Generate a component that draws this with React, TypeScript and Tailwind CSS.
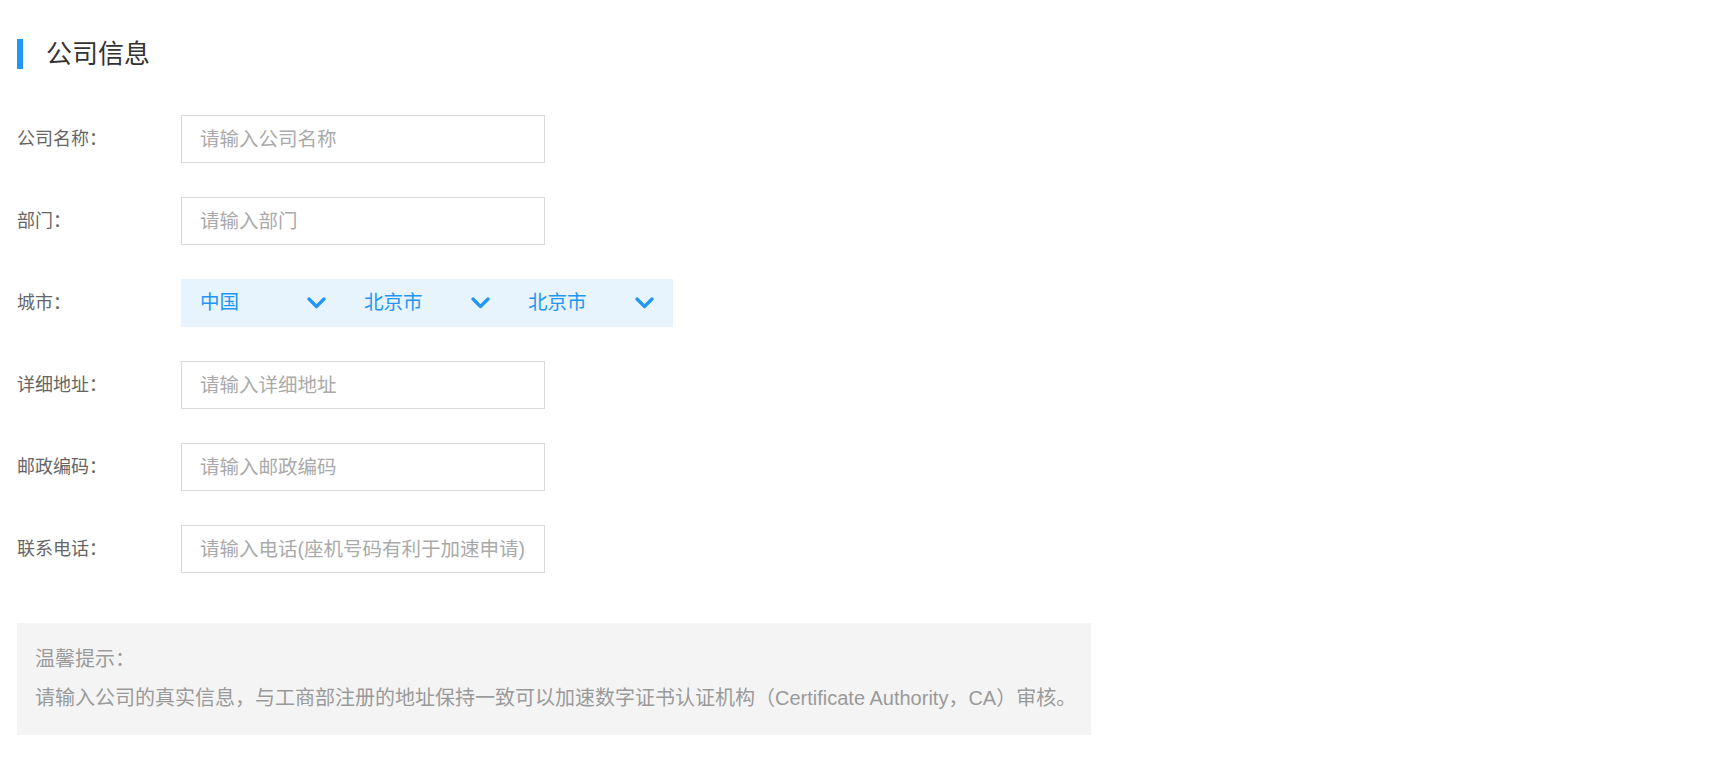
import { useState } from "react"

const FONT = { fontFamily: '"Liberation Sans", "Noto Sans CJK SC", sans-serif' }

const fields = [
  { label: "公司名称：", placeholder: "请输入公司名称" },
  { label: "部门：", placeholder: "请输入部门" },
  { label: "城市：", select: true },
  { label: "详细地址：", placeholder: "请输入详细地址" },
  { label: "邮政编码：", placeholder: "请输入邮政编码" },
  { label: "联系电话：", placeholder: "请输入电话(座机号码有利于加速申请)" },
]

function Chevron() {
  return (
    <svg width="19" height="12" viewBox="0 0 19 12" fill="none">
      <polyline points="2,2 9.5,9.5 17,2" stroke="#2196f3" strokeWidth="3.2" strokeLinecap="round" strokeLinejoin="round" />
    </svg>
  )
}

function CitySelect() {
  const [values] = useState(["中国", "北京市", "北京市"])
  return (
    <div className="flex w-[492px] h-[48px] bg-[#e8f4fd]">
      {values.map((v, i) => (
        <div key={i} className="flex w-[164px] items-center justify-between pl-[19px] pr-[19px] text-[19.5px] text-[#2196f3]">
          <span>{v}</span>
          <Chevron />
        </div>
      ))}
    </div>
  )
}

export default function App() {
  return (
    <div className="min-h-screen bg-white px-[17px] pt-[39px] pb-10" style={FONT}>
      <div className="flex items-center h-[30px]">
        <div className="w-[6px] h-[30px] bg-[#2196f3]" />
        <h2 className="ml-[23px] text-[26px] leading-[30px] text-[#333]">公司信息</h2>
      </div>

      <div className="mt-[46px] flex flex-col gap-[34px]">
        {fields.map((f) => (
          <div key={f.label} className="flex items-center">
            <label className="w-[164px] text-[18px] text-[#666]">{f.label}</label>
            {f.select ? (
              <CitySelect />
            ) : (
              <input
                type="text"
                placeholder={f.placeholder}
                className="w-[364px] h-[48px] border border-[#d9d9d9] pl-[18px] pr-2 text-[19.5px] text-[#333] outline-none placeholder:text-[#aaa]"
              />
            )}
          </div>
        ))}
      </div>

      <div className="mt-[50px] w-[1074px] bg-[#f4f4f4] px-[18px] py-[17px] text-[20px] leading-[39px] text-[#9a9a9a] whitespace-nowrap">
        <p>温馨提示：</p>
        <p>请输入公司的真实信息，与工商部注册的地址保持一致可以加速数字证书认证机构（Certificate Authority，CA）审核。</p>
      </div>
    </div>
  )
}
